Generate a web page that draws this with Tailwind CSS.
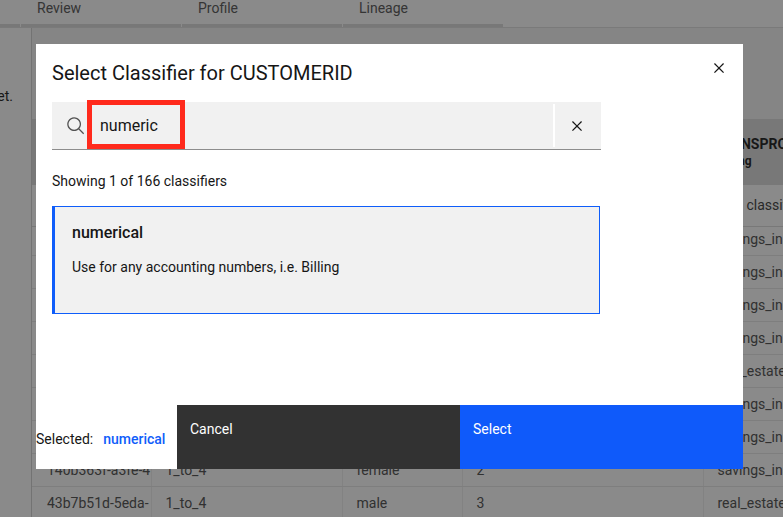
<!DOCTYPE html>
<html lang="en">
<head>
<meta charset="utf-8">
<meta name="viewport" content="width=device-width, initial-scale=1">
<title>Select Classifier</title>
<script src="https://cdn.jsdelivr.net/npm/@tailwindcss/browser@4"></script>
</head>
<body class="relative h-screen overflow-hidden bg-white font-['Roboto','Liberation_Sans',sans-serif] text-[14px] leading-5 text-[#161616]">

<!-- Page behind the dialog -->
<div class="flex h-full flex-col" aria-hidden="true">
  <nav class="flex h-7 shrink-0 items-stretch border-b border-[#dcdcdc] bg-[#fcfcfc] text-[#525252]">
    <span class="w-5 border-b-3 border-[#d8d8d8]"></span>
    <span class="ml-px w-40 border-b-3 border-[#d8d8d8] px-4 pb-4 -mt-[2px]">Review</span>
    <span class="ml-px w-40 border-b-3 border-[#d8d8d8] px-4 pb-4 -mt-[2px]">Profile</span>
    <span class="ml-px w-40 border-b-3 border-[#d8d8d8] px-4 pb-4 -mt-[2px]">Lineage</span>
  </nav>
  <div class="flex min-h-0 flex-1">
    <aside class="flex w-8 shrink-0 justify-end overflow-hidden border-r border-[#cfcfcf] bg-[#fcfcfc] pt-[58px] pr-[18px] whitespace-nowrap">
      <p>asset.</p>
    </aside>
    <main class="min-w-0 flex-1 overflow-hidden bg-[#f2f2f2] pt-[91px]">
      <table class="w-[960px] table-fixed border-collapse bg-[#fcfcfc] text-left whitespace-nowrap text-[#4a4a4a] [&_tbody_tr]:h-[33px] [&_td]:overflow-hidden [&_td]:border-b [&_td]:border-[#e4e4e4] [&_td]:p-0 [&_td]:pl-[14px] [&_td+td]:border-l [&_td+td]:border-l-[#ededed]">
        <colgroup><col class="w-[119px]"><col class="w-[191px]"><col class="w-[120px]"><col class="w-[241px]"><col></colgroup>
        <thead>
          <tr class="h-[66px] bg-[#d8d8d8] text-[#161616]">
            <th></th><th></th><th></th><th></th>
            <th class="pl-4 font-bold leading-4">OWNSPROPERTY<br><span class="text-[12px]">String</span></th>
          </tr>
          <tr class="h-[41px] border-b border-[#d8d8d8] text-[#393939]">
            <th></th><th></th><th></th><th></th>
            <th class="pl-[22px] font-normal">No classifier</th>
          </tr>
        </thead>
        <tbody class="[&_td:first-child]:pl-[15px]">
          <tr class="h-[29px]!"><td></td><td></td><td></td><td></td><td class="pb-1!">savings_insurance</td></tr>
          <tr><td></td><td></td><td></td><td></td><td>savings_insurance</td></tr>
          <tr><td></td><td></td><td></td><td></td><td>savings_insurance</td></tr>
          <tr><td></td><td></td><td></td><td></td><td>savings_insurance</td></tr>
          <tr><td></td><td></td><td></td><td></td><td>real_estate</td></tr>
          <tr><td></td><td></td><td></td><td></td><td>savings_insurance</td></tr>
          <tr><td></td><td></td><td></td><td></td><td>savings_insurance</td></tr>
          <tr><td>140b363f-a3fe-4</td><td>1_to_4</td><td>female</td><td>2</td><td>savings_insurance</td></tr>
          <tr><td>43b7b51d-5eda-</td><td>1_to_4</td><td>male</td><td>3</td><td>real_estate</td></tr>
        </tbody>
      </table>
    </main>
  </div>
</div>

<!-- Dimmed layer with the dialog -->
<div class="absolute inset-0 flex bg-[#171717]/50 pt-11 pr-10 pb-12 pl-9">
  <section role="dialog" aria-modal="true" aria-labelledby="title" class="flex min-w-0 flex-1 flex-col bg-white">
    <header class="flex h-[58px] shrink-0 items-start justify-between pl-4">
      <h1 id="title" class="pt-4 text-[20px] leading-[26px]">Select Classifier for CUSTOMERID</h1>
      <button type="button" aria-label="Close" class="flex size-12 items-center justify-center">
        <svg class="size-5" viewBox="0 0 32 32" fill="#161616"><path d="M24 9.4 22.6 8 16 14.6 9.4 8 8 9.4l6.6 6.6L8 22.6 9.4 24l6.6-6.6 6.6 6.6 1.4-1.4-6.6-6.6L24 9.4z"/></svg>
      </button>
    </header>
    <div class="min-h-0 flex-1 pr-[142px] pl-4">
      <div class="relative flex h-12 items-stretch border-b border-[#8d8d8d] bg-[#f1f1f1]">
        <label for="search" class="flex w-12 items-center justify-center" aria-label="Search classifiers">
          <svg class="size-5" viewBox="0 0 32 32" fill="#525252"><path d="m29 27.586-7.552-7.552a11.018 11.018 0 1 0-1.414 1.414L27.586 29ZM4 13a9 9 0 1 1 9 9 9.010 9.010 0 0 1-9-9Z"/></svg>
        </label>
        <input id="search" type="text" value="numeric" class="min-w-0 flex-1 bg-transparent text-[16px] outline-none">
        <span class="my-[2px] w-[2px] bg-white"></span>
        <button type="button" aria-label="Clear search" class="flex w-[46px] items-center justify-center pr-[2px]">
          <svg class="size-5" viewBox="0 0 32 32" fill="#161616"><path d="M24 9.4 22.6 8 16 14.6 9.4 8 8 9.4l6.6 6.6L8 22.6 9.4 24l6.6-6.6 6.6 6.6 1.4-1.4-6.6-6.6L24 9.4z"/></svg>
        </button>
        <span class="pointer-events-none absolute -top-[2px] left-[35px] h-[49px] w-[98px] border-5 border-[#ff2a1c]"></span>
      </div>
      <p class="mt-[21px]">Showing 1 of 166 classifiers</p>
      <div class="mt-[15px] pr-px">
        <button type="button" class="block h-[108px] w-full border border-l-3 border-[#0f5dfa] bg-[#f1f1f1] px-[17px] pt-[15px] pb-9 text-left">
          <span class="block text-[16px] leading-[22px] font-medium">numerical</span>
          <span class="mt-[13px] block">Use for any accounting numbers, i.e. Billing</span>
        </button>
      </div>
    </div>
    <footer class="flex h-16 shrink-0">
      <p class="flex w-[141px] items-center gap-[10px] pt-1 whitespace-nowrap">Selected: <strong class="font-medium text-[#0f5dfa]">numerical</strong></p>
      <button type="button" class="flex flex-1 items-start bg-[#323232] px-[13px] pt-[14px] text-white">Cancel</button>
      <button type="button" class="flex flex-1 items-start bg-[#0f5afa] px-[13px] pt-[14px] text-white">Select</button>
    </footer>
  </section>
</div>
</body>
</html>
